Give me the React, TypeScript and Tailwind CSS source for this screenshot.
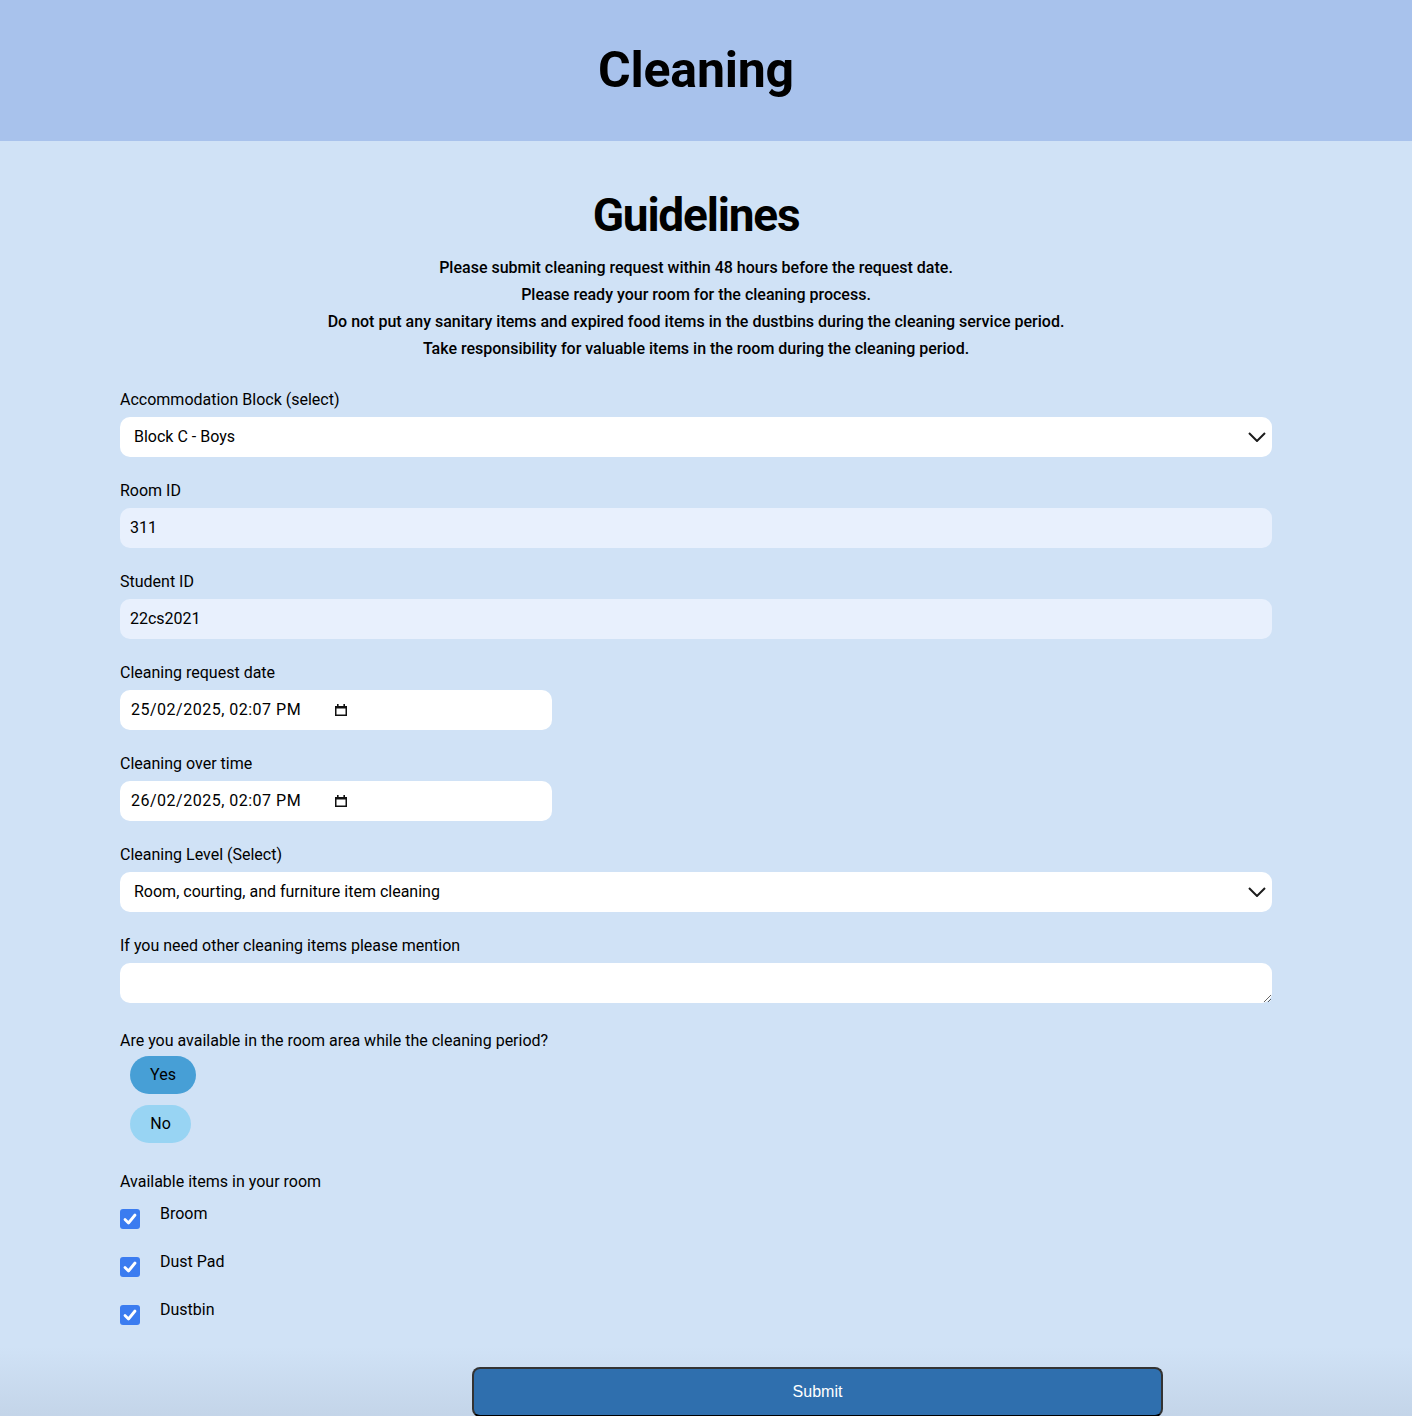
const guidelines = [
  'Please submit cleaning request within 48 hours before the request date.',
  'Please ready your room for the cleaning process.',
  'Do not put any sanitary items and expired food items in the dustbins during the cleaning service period.',
  'Take responsibility for valuable items in the room during the cleaning period.',
]

const items = ['Broom', 'Dust Pad', 'Dustbin']

function Label({ children }: { children: React.ReactNode }) {
  return <label className="block h-[25px] pt-px text-base leading-6 text-black">{children}</label>
}

function Chevron() {
  return (
    <svg width="18" height="10" viewBox="0 0 18 10">
      <path d="M1 1 L9 9 L17 1" fill="none" stroke="#1c1c1c" strokeWidth="2" />
    </svg>
  )
}

function SelectBox({ value }: { value: string }) {
  return (
    <div className="mt-[5px] flex h-10 items-center justify-between rounded-[10px] bg-white pl-[14px] pr-[6px] text-base">
      <span>{value}</span>
      <Chevron />
    </div>
  )
}

function CalendarIcon() {
  return (
    <svg width="14" height="14" viewBox="0 0 14 14" className="shrink-0">
      <rect x="1.75" y="3.75" width="10.5" height="8.5" fill="none" stroke="#111" strokeWidth="1.5" />
      <rect x="1" y="3" width="12" height="2.5" fill="#111" />
      <rect x="3" y="1" width="1.6" height="3" fill="#111" />
      <rect x="9.4" y="1" width="1.6" height="3" fill="#111" />
    </svg>
  )
}

function DateBox({ value }: { value: string }) {
  return (
    <div className="mt-[5px] flex h-10 w-[432px] items-center rounded-[10px] bg-white pl-[11px] text-base">
      <span className="w-[203px] whitespace-nowrap tracking-[0.5px]">{value}</span>
      <CalendarIcon />
    </div>
  )
}

export default function App() {
  return (
    <div className="min-h-[1416px] bg-[#d0e2f6] font-['Roboto',sans-serif] text-black">
      <header className="flex h-[141px] items-center justify-center bg-[#a8c2ec] pr-5">
        <h1 className="text-[50px] font-bold tracking-[-0.2px]">Cleaning</h1>
      </header>

      <main className="pr-5">
        <h2 className="mt-[44px] text-center text-[46px] leading-[60px] font-bold tracking-[-1.2px]">
          Guidelines
        </h2>
        <div className="mt-[9px] flex flex-col items-center">
          {guidelines.map((g) => (
            <p key={g} className="text-base leading-[27px] font-medium">
              {g}
            </p>
          ))}
        </div>

        <form className="mx-[120px] mt-[25px]">
          <Label>Accommodation Block (select)</Label>
          <SelectBox value="Block C - Boys" />

          <div className="mt-[21px]">
            <Label>Room ID</Label>
            <div className="mt-[5px] flex h-10 items-center rounded-[10px] bg-[#e8f0fd] pl-[10px] text-base">311</div>
          </div>

          <div className="mt-[21px]">
            <Label>Student ID</Label>
            <div className="mt-[5px] flex h-10 items-center rounded-[10px] bg-[#e8f0fd] pl-[10px] text-base">22cs2021</div>
          </div>

          <div className="mt-[21px]">
            <Label>Cleaning request date</Label>
            <DateBox value="25/02/2025, 02:07 PM" />
          </div>

          <div className="mt-[21px]">
            <Label>Cleaning over time</Label>
            <DateBox value="26/02/2025, 02:07 PM" />
          </div>

          <div className="mt-[21px]">
            <Label>Cleaning Level (Select)</Label>
            <SelectBox value="Room, courting, and furniture item cleaning" />
          </div>

          <div className="mt-[21px]">
            <Label>If you need other cleaning items please mention</Label>
            <textarea className="mt-[5px] block h-10 w-full rounded-[10px] bg-white px-3 py-2 outline-none" />
          </div>

          <div className="mt-[25px]">
            <Label>Are you available in the room area while the cleaning period?</Label>
            <div className="ml-[10px] mt-[3px] flex flex-col items-start gap-[11px]">
              <button type="button" className="h-[38px] w-[66px] rounded-full bg-[#479fd6] text-base">
                Yes
              </button>
              <button type="button" className="h-[38px] w-[61px] rounded-full bg-[#98d4f3] text-base">
                No
              </button>
            </div>
          </div>

          <div className="mt-[26px]">
            <Label>Available items in your room</Label>
            <div className="mt-[10px] flex flex-col gap-[23px]">
              {items.map((it) => (
                <div key={it} className="flex items-start">
                  <span className="mt-[5px] flex h-5 w-5 items-center justify-center rounded-[3px] bg-[#3b7cf0]">
                    <svg width="16" height="16" viewBox="0 0 16 16">
                      <path d="M3 8.5 L6.5 12 L13 4" fill="none" stroke="white" strokeWidth="2.8" strokeLinecap="round" strokeLinejoin="round" />
                    </svg>
                  </span>
                  <span className="ml-5 text-base leading-5">{it}</span>
                </div>
              ))}
            </div>
          </div>
        </form>
      </main>

      <div className="mt-[22px] bg-gradient-to-b from-[#d0e2f6] to-[#c2d3e7] pt-[20px] pb-2">
        <button
          type="button"
          className="ml-[472px] flex h-[50px] w-[691px] items-center justify-center rounded-[8px] border-2 border-[#333] border-b-black bg-[#2f6fae] font-['Liberation_Sans',sans-serif] text-[16px] text-white"
        >
          Submit
        </button>
      </div>
    </div>
  )
}
